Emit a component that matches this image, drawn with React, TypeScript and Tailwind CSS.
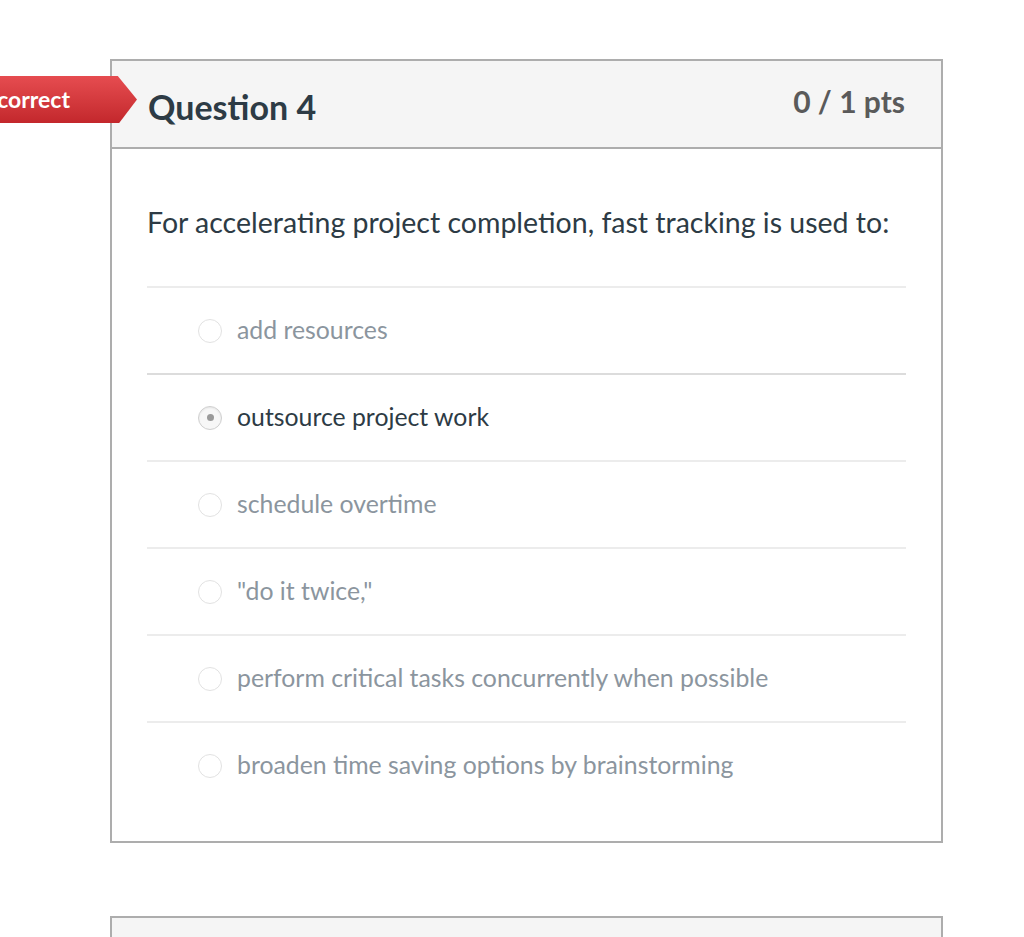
import React from "react";

const options = [
  { text: "add resources", selected: false },
  { text: "outsource project work", selected: true },
  { text: "schedule overtime", selected: false },
  { text: '"do it twice,"', selected: false },
  { text: "perform critical tasks concurrently when possible", selected: false },
  { text: "broaden time saving options by brainstorming", selected: false },
];

function Radio({ selected }: { selected: boolean }) {
  if (selected) {
    return (
      <span className="flex h-[24px] w-[24px] shrink-0 items-center justify-center rounded-full border border-[#cfcfcf] bg-[#f7f7f7] shadow-[inset_0_1px_2px_rgba(0,0,0,0.08)]">
        <span className="h-[7px] w-[7px] rounded-full bg-[#9a9a9a]" />
      </span>
    );
  }
  return (
    <span className="h-[24px] w-[24px] shrink-0 rounded-full border border-[#e2e2e2] bg-white" />
  );
}

export default function App() {
  return (
    <div
      className="relative min-h-[937px] w-full overflow-hidden bg-white"
      style={{ fontFamily: "Lato, 'Open Sans', Arial, sans-serif" }}
    >
      {/* Incorrect flag */}
      <div className="absolute left-0 top-[76px] z-10 h-[47px] w-[137px] bg-gradient-to-b from-[#e64c50] to-[#c3272c] [clip-path:polygon(0_0,86%_0,100%_50%,87%_100%,0_100%)]">
        <span className="absolute right-[67px] top-0 flex h-full items-center whitespace-nowrap text-[23px] font-bold leading-none text-white">
          Incorrect
        </span>
      </div>

      <div className="pl-[110px] pt-[59px]">
        <div className="w-[833px] border-2 border-[#adadad]">
          <div className="flex h-[88px] items-start justify-between border-b-2 border-[#adadad] bg-[#f5f5f5] pl-[36px] pr-[36px]">
            <h2 className="pt-[26px] text-[34px] font-bold leading-[40px] text-[#2d3b45]">
              Question 4
            </h2>
            <div className="pt-[22px] text-[30px] font-bold leading-[36px] text-[#5a5a5a]">
              0 / 1 pts
            </div>
          </div>
          <div className="px-[35px] pb-[33px]">
            <p className="pb-[45px] pt-[54px] text-[28.5px] leading-[38px] text-[#2d3b45]">
              For accelerating project completion, fast tracking is used to:
            </p>
            <div>
              {options.map((o, i) => (
                <div
                  key={i}
                  className={`flex h-[87px] items-center border-t-2 pl-[51px] ${
                    i === 1 ? "border-[#dcdcdc]" : "border-[#ececec]"
                  }`}
                >
                  <Radio selected={o.selected} />
                  <span
                    className={`ml-[15px] pb-[2px] text-[24.8px] leading-[30px] ${
                      o.selected ? "text-[#2d3b45]" : "text-[#8b959e]"
                    }`}
                  >
                    {o.text}
                  </span>
                </div>
              ))}
            </div>
          </div>
        </div>

        <div className="mt-[73px] h-[100px] w-[833px] border-2 border-[#adadad] bg-[#f5f5f5]" />
      </div>
    </div>
  );
}
